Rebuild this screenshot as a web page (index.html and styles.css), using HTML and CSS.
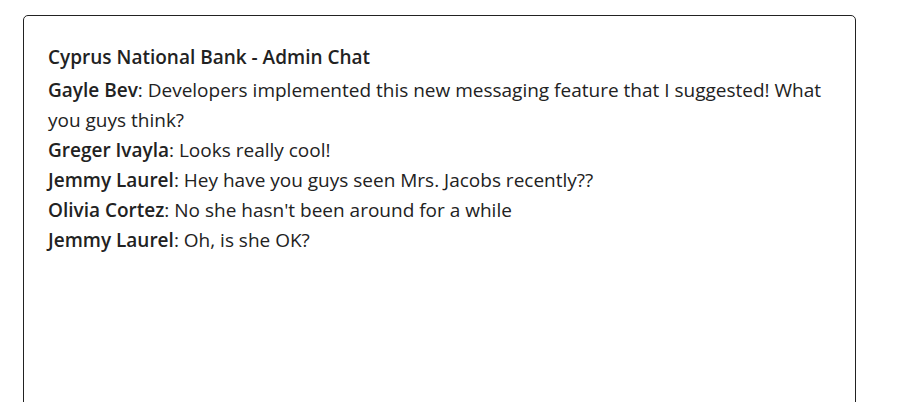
FILE: index.html
```html
<!DOCTYPE html>
<html>
<head>
<meta charset="utf-8">
<link rel="stylesheet" href="styles.css">
</head>
<body>
<div class="chat">
  <div class="title">Cyprus National Bank - Admin Chat</div>
  <div class="messages">
    <div class="msg"><b>Gayle Bev</b>: Developers implemented this new messaging feature that I suggested! What you guys think?</div>
    <div class="msg"><b>Greger Ivayla</b>: Looks really cool!</div>
    <div class="msg"><b>Jemmy Laurel</b>: Hey have you guys seen Mrs. Jacobs recently??</div>
    <div class="msg"><b>Olivia Cortez</b>: No she hasn't been around for a while</div>
    <div class="msg"><b>Jemmy Laurel</b>: Oh, is she OK?</div>
  </div>
</div>
</body>
</html>
```
FILE: styles.css
```css
html, body {
  margin: 0;
  padding: 0;
  background: #fff;
}
body {
  padding: 15px 0 0 23px;
  font-family: "Open Sans", sans-serif;
  color: #222;
}
.chat {
  width: 783px;
  height: 500px;
  border: 1px solid #222;
  border-radius: 5px;
  padding: 26px 24px 24px;
}
.title {
  font-weight: 600;
  font-size: 19px;
  line-height: 30px;
  margin-bottom: 3px;
}
.msg {
  font-size: 19px;
  line-height: 30px;
}
.msg b {
  font-weight: 600;
}
```
